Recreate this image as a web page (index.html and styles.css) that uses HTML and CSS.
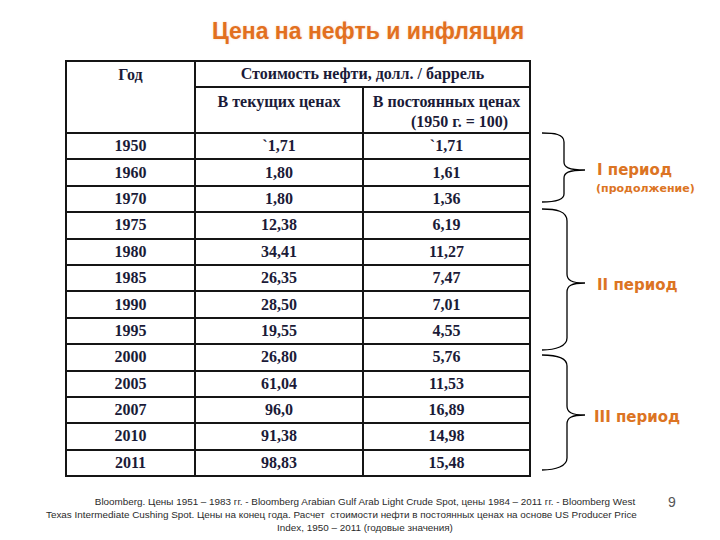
FILE: index.html
```html
<!DOCTYPE html>
<html lang="ru">
<head>
<meta charset="utf-8">
<title>Цена на нефть и инфляция</title>
<link rel="stylesheet" href="styles.css">
</head>
<body>
<div class="slide">
  <h1 class="title">Цена на нефть и инфляция</h1>
  <div class="content">
    <table class="prices">
      <colgroup><col class="c-year"><col class="c-cur"><col class="c-const"></colgroup>
      <thead>
        <tr class="h1row"><th rowspan="2" class="year-h">Год</th><th colspan="2">Стоимость нефти, долл. / баррель</th></tr>
        <tr class="h2row"><th>В текущих ценах</th><th>В постоянных ценах<span class="base">(1950 г. = 100)</span></th></tr>
      </thead>
      <tbody>
        <tr><td>1950</td><td>`1,71</td><td>`1,71</td></tr>
        <tr><td>1960</td><td>1,80</td><td>1,61</td></tr>
        <tr><td>1970</td><td>1,80</td><td>1,36</td></tr>
        <tr><td>1975</td><td>12,38</td><td>6,19</td></tr>
        <tr><td>1980</td><td>34,41</td><td>11,27</td></tr>
        <tr><td>1985</td><td>26,35</td><td>7,47</td></tr>
        <tr><td>1990</td><td>28,50</td><td>7,01</td></tr>
        <tr><td>1995</td><td>19,55</td><td>4,55</td></tr>
        <tr><td>2000</td><td>26,80</td><td>5,76</td></tr>
        <tr><td>2005</td><td>61,04</td><td>11,53</td></tr>
        <tr><td>2007</td><td>96,0</td><td>16,89</td></tr>
        <tr><td>2010</td><td>91,38</td><td>14,98</td></tr>
        <tr><td>2011</td><td>98,83</td><td>15,48</td></tr>
      </tbody>
    </table>
    <div class="periods">
      <div class="period p1">
        <svg class="brace" width="50" height="74" viewBox="0 0 50 74"><path d="M2 3 C14 3 24 4 24 12 V32 C24 37 28 40 45 40 C28 40 24 43 24 48 V64 C24 70 14 72 2 72"/></svg>
        <div class="period-label"><div class="pname">I период</div><div class="pnote">(продолжение)</div></div>
      </div>
      <div class="period p2">
        <svg class="brace" width="50" height="148" viewBox="0 0 50 148"><path d="M2 5 C16 5 27 7 27 17 V70 C27 76 31 79 45 79 C31 79 27 82 27 88 V134 C27 142 16 146 2 146"/></svg>
        <div class="period-label"><div class="pname">II период</div></div>
      </div>
      <div class="period p3">
        <svg class="brace" width="50" height="122" viewBox="0 0 50 122"><path d="M2 3 C16 3 27 5 27 14 V54 C27 60 31 63 45 63 C31 63 27 66 27 72 V106 C27 114 16 118 2 118"/></svg>
        <div class="period-label"><div class="pname">III период</div></div>
      </div>
    </div>
  </div>
  <div class="footer">
    <div class="note">
      <span class="nl centered">Bloomberg. Цены 1951 – 1983 гг. - Bloomberg Arabian Gulf Arab Light Crude Spot, цены 1984 – 2011 гг. - Bloomberg West</span>
      <span class="nl">Texas Intermediate Cushing Spot. Цены на конец года. Расчет&nbsp; стоимости нефти в постоянных ценах на основе US Producer Price</span>
      <span class="nl centered">Index, 1950 – 2011 (годовые значения)</span>
    </div>
    <div class="page-num">9</div>
  </div>
</div>
</body>
</html>
```
FILE: styles.css
```css
html, body {
  margin: 0;
  padding: 0;
  background: #ffffff;
}

.slide {
  width: 720px;
  height: 540px;
  overflow: hidden;
}

.title {
  margin: 0;
  padding: 18px 0 0 16px;
  height: 26px;
  line-height: 26px;
  text-align: center;
  font-family: "Liberation Sans", Arial, sans-serif;
  font-weight: bold;
  font-size: 23px;
  color: #e2701f;
  text-shadow: 0 0 2px rgba(240, 170, 110, 0.5);
}

.content {
  display: flex;
  align-items: flex-start;
  margin-top: 16px;
  padding-left: 65px;
  height: 416px;
}

.prices {
  border-collapse: collapse;
  table-layout: fixed;
  width: 464px;
  font-family: "Liberation Serif", "Times New Roman", serif;
  font-weight: bold;
  font-size: 16px;
  color: #1b1b38;
}

.c-year { width: 129px; }
.c-cur { width: 168px; }
.c-const { width: 167px; }

.prices th,
.prices td {
  border: 2px solid #151515;
  padding: 0;
  text-align: center;
  font-weight: bold;
}

.h1row th {
  height: 24px;
  vertical-align: middle;
  line-height: 18px;
}

.prices th.year-h {
  vertical-align: top;
  padding-top: 4px;
}

.h2row th {
  height: 40px;
  vertical-align: top;
  padding-top: 4px;
  line-height: 20px;
}

.base {
  display: block;
  padding-left: 26px;
}

.prices tbody tr {
  height: 26.4px;
}

.prices td {
  vertical-align: middle;
  line-height: 18px;
}

.periods {
  display: flex;
  flex-direction: column;
  margin-left: 9px;
  margin-top: 70px;
}

.period {
  display: flex;
  align-items: flex-start;
}

.brace {
  display: block;
  flex: none;
}

.brace path {
  fill: none;
  stroke: #000;
  stroke-width: 1.3;
}

.period-label {
  margin-left: 7px;
  font-family: "DejaVu Sans", Verdana, sans-serif;
  font-weight: bold;
  color: #dc7423;
  white-space: nowrap;
}

.pname {
  font-size: 15px;
  line-height: 18px;
}

.pnote {
  font-size: 11px;
  line-height: 14px;
  margin-top: 3px;
  margin-left: -1px;
}

.p1 .period-label { margin-top: 31px; }
.p2 .period-label { margin-top: 72px; }
.p3 .period-label { margin-top: 56px; margin-left: 4px; }

.footer {
  display: flex;
  align-items: flex-start;
  margin-top: 19px;
  padding-left: 46px;
}

.note {
  width: 604px;
  font-family: "Liberation Sans", Arial, sans-serif;
  font-size: 9.9px;
  line-height: 13px;
  color: #2a2a2a;
}

.nl {
  display: block;
  white-space: nowrap;
}

.nl.centered {
  text-align: center;
  padding-left: 34px;
}

.page-num {
  margin-left: 18px;
  margin-top: -1px;
  font-family: "Liberation Sans", Arial, sans-serif;
  font-size: 14px;
  line-height: 16px;
  color: #555;
}
```
